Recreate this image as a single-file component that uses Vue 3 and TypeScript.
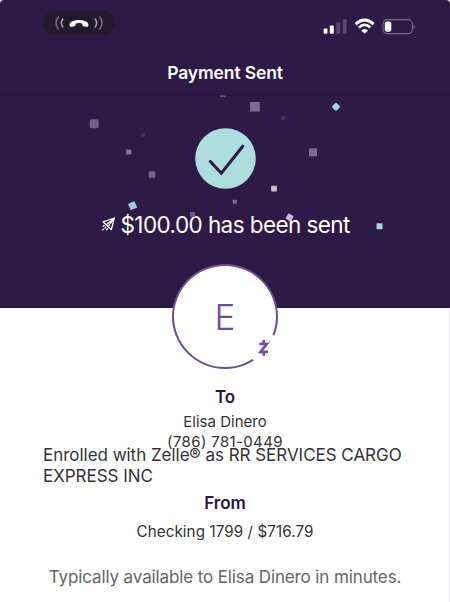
<script setup lang="ts">
interface Piece {
  x: number
  y: number
  size: number
  color: string
  rotate?: number
  radius?: number
}

const confetti: Piece[] = [
  { x: 94.2, y: 123.7, size: 9, color: '#725d84', radius: 2 },
  { x: 143, y: 134.8, size: 4, color: '#46306a' },
  { x: 128.7, y: 152, size: 5, color: '#8a7599' },
  { x: 152, y: 174.5, size: 6.4, color: '#77628b' },
  { x: 132.6, y: 205.7, size: 7, color: '#9fc8d4', rotate: -24 },
  { x: 192.5, y: 214.5, size: 5, color: '#6f5a86' },
  { x: 254.9, y: 106.7, size: 9.6, color: '#806c93', radius: 0.6 },
  { x: 336, y: 106.7, size: 6.4, color: '#a6d3da', rotate: 45, radius: 1.4 },
  { x: 283.2, y: 118, size: 4.4, color: '#46306a' },
  { x: 313, y: 152.2, size: 8, color: '#7f6a91' },
  { x: 274, y: 188.6, size: 5.8, color: '#cbbdce' },
  { x: 234.8, y: 201.7, size: 4, color: '#7f6a91' },
  { x: 289.6, y: 217.4, size: 6.2, color: '#cbb8e0', rotate: 30, radius: 1 },
  { x: 379.5, y: 226.2, size: 6, color: '#a6d8de' },
]
</script>

<template>
  <main class="screen">
    <header class="top">
      <div class="status">
        <div class="call">
          <svg width="50" height="16" viewBox="0 0 50 16" fill="none" stroke-linecap="round">
            <path d="M4.2 2Q-.2 8 4.2 14M45.8 2Q50.2 8 45.8 14" stroke="#766b7b" stroke-width="1.6" />
            <path d="M8.8 4Q5.9 8 8.8 12M41.2 4Q44.1 8 41.2 12" stroke="#aaa2ad" stroke-width="1.5" />
            <path d="M15.6 9.5C16 3.4 34 3.4 34.4 9.5C34.6 11.6 33.8 12 32 11.7L29.8 11.3C28.4 11 28.3 10.4 28.3 8.6C26.3 7.8 23.7 7.8 21.7 8.6C21.7 10.4 21.6 11 20.2 11.3L18 11.7C16.2 12 15.4 11.6 15.6 9.5Z" fill="#fff" />
          </svg>
        </div>
        <svg class="indicators" width="94" height="18" viewBox="0 0 94 18" fill="none">
          <rect x="1.6" y="10.4" width="3.9" height="5.4" rx="1" fill="#fff" />
          <rect x="7.8" y="7.5" width="4" height="8.3" rx="1" fill="#fff" />
          <rect x="14.4" y="4.3" width="3.8" height="11.5" rx="1" fill="#5b4870" />
          <rect x="20.7" y="1.2" width="3.8" height="14.6" rx="1" fill="#5b4870" />
          <g transform="translate(.6)">
            <path d="M33 6.1Q42 -2 51 6.1" stroke="#fff" stroke-width="2.8" />
            <path d="M36.2 9.5Q42 4.3 47.8 9.5" stroke="#fff" stroke-width="2.7" />
            <path d="M38.6 12.4Q42 9.4 45.4 12.4L42 15.8Z" fill="#fff" />
          </g>
          <rect x="61" y="1.6" width="29.4" height="14" rx="4" stroke="#7b6b89" stroke-width="1.1" />
          <rect x="62.8" y="3.5" width="6.5" height="10.2" rx="2" fill="#fff" />
          <path d="M91.8 6.2Q94 8.5 91.8 10.9Z" fill="#7b6b89" />
        </svg>
      </div>
      <h1>Payment Sent</h1>
    </header>

    <section class="hero">
      <div class="check">
        <svg width="61" height="61" viewBox="0 0 61 61" fill="none">
          <circle cx="30.5" cy="30.5" r="30.3" fill="#aedddf" />
          <path d="M15.3 33.5L26.3 45.2L47.8 18.2" stroke="#2b1c48" stroke-width="3.1" stroke-linecap="round" />
        </svg>
      </div>
      <div class="amount">
        <svg width="15" height="15" viewBox="0 0 15 15" fill="none" stroke="#fff" stroke-width="1.3" stroke-linejoin="round" stroke-linecap="round">
          <path d="M13.4 1L2 4.8L5.2 7.8L7 9.6L10.3 12.6L13.4 1L5.2 7.8M13.4 1L7 9.6" />
          <path d="M3.2 8.6L1.2 10M4.8 10.2L1.2 13.4M6.4 11.8L4.8 13.6" stroke-dasharray="1.2 1.7" />
        </svg>
        <span>$100.00 has been sent</span>
      </div>
      <svg class="confetti" width="450" height="308" viewBox="0 0 450 308">
        <rect x="220" y="95.4" width="5.4" height="1.6" fill="#6f5a86" />
        <rect
          v-for="(p, i) in confetti"
          :key="i"
          :x="p.x - p.size / 2"
          :y="p.y - p.size / 2"
          :width="p.size"
          :height="p.size"
          :rx="p.radius ?? 0.5"
          :fill="p.color"
          :transform="`rotate(${p.rotate ?? 0} ${p.x} ${p.y})`"
        />
      </svg>
    </section>

    <section class="details">
      <div class="avatar">
        <span>E</span>
        <div class="zelle">
          <svg width="14" height="18" viewBox="0 0 14 18" fill="none" stroke="#6e4c98">
            <path d="M2.4 4.8H9.8L3.6 12.9H11" stroke-width="2.7" />
            <path d="M6.7 1V4.4M6.7 13.4V16.8" stroke-width="2.5" />
            <circle cx="12.8" cy="2.3" r=".5" stroke-width=".5" />
          </svg>
        </div>
      </div>
      <h2>To</h2>
      <p class="name">Elisa Dinero</p>
      <p class="phone">(786) 781-0449</p>
      <p class="enrolled">Enrolled with Zelle® as RR SERVICES CARGO<br />EXPRESS INC</p>
      <h2 class="from">From</h2>
      <p class="account">Checking 1799 / $716.79</p>
      <p class="timing">Typically available to Elisa Dinero in minutes.</p>
    </section>
  </main>
</template>

<style>
body {
  margin: 0;
  background: #fff;
}
</style>

<style scoped>
.screen {
  position: relative;
  width: 450px;
  height: 602px;
  overflow: hidden;
  background: #fff;
  color: #343236;
  font-family: Inter, "Liberation Sans", sans-serif;
}
h1, h2, p {
  margin: 0;
  white-space: nowrap;
}
.top {
  box-sizing: border-box;
  height: 96px;
  background: #2e1a47;
  border-bottom: 1px solid #29183e;
  border-radius: 4px 4px 0 0;
}
.status {
  display: flex;
  justify-content: space-between;
  box-sizing: border-box;
  height: 60px;
  padding: 11px 34px 0 43px;
}
.call {
  display: flex;
  align-items: center;
  justify-content: center;
  width: 72px;
  height: 24px;
  border-radius: 12px;
  background: #241a2f;
}
.indicators {
  margin-top: 7px;
}
h1 {
  color: #fff;
  font-size: 17.5px;
  font-weight: 600;
  letter-spacing: -0.14px;
  line-height: 25px;
  text-align: center;
}
.hero {
  display: flex;
  flex-direction: column;
  align-items: center;
  height: 212px;
  background: #2e1a47;
}
.check {
  height: 61px;
  margin-top: 32px;
}
.amount {
  display: flex;
  align-items: center;
  gap: 5px;
  width: 249px;
  height: 30px;
  margin-top: 20px;
  color: #fff;
  font-size: 22.5px;
  letter-spacing: -0.58px;
  white-space: nowrap;
}
.amount svg {
  flex: none;
}
.confetti {
  position: absolute;
  top: 0;
  left: 0;
  pointer-events: none;
}
.details {
  display: flex;
  flex-direction: column;
  align-items: center;
  box-sizing: border-box;
  height: 294px;
  box-shadow: inset -1px 0 #e9e7eb;
}
.avatar {
  position: relative;
  display: flex;
  flex: none;
  align-items: center;
  justify-content: center;
  box-sizing: border-box;
  width: 106px;
  height: 105px;
  margin-top: -44px;
  border: 2px solid #6b4f8e;
  border-radius: 50%;
  background: #fff;
  color: #6d5092;
  font-size: 35px;
  font-weight: 300;
}
.zelle {
  position: absolute;
  right: -4px;
  bottom: 3px;
  display: flex;
  align-items: center;
  justify-content: center;
  width: 32px;
  height: 32px;
  border-radius: 50%;
  background: #fff;
}
h2 {
  margin-top: 16px;
  color: #2b1746;
  font-size: 17px;
  font-weight: 600;
  line-height: 24px;
}
.name {
  margin-top: 4px;
  font-size: 14.9px;
  letter-spacing: 0.07px;
  line-height: 18px;
}
.phone {
  margin-top: 1px;
  font-size: 15px;
  letter-spacing: 0.36px;
  line-height: 19px;
}
.enrolled {
  align-self: flex-start;
  margin: -6px 0 0 43px;
  font-size: 17px;
  letter-spacing: -0.03px;
  line-height: 21px;
}
.from {
  margin-top: 4px;
}
.account {
  margin-top: 7px;
  font-size: 15.2px;
  letter-spacing: 0.08px;
  line-height: 20px;
}
.timing {
  margin-top: 24px;
  color: #666468;
  font-size: 17px;
  letter-spacing: -0.12px;
  line-height: 22px;
}
</style>
